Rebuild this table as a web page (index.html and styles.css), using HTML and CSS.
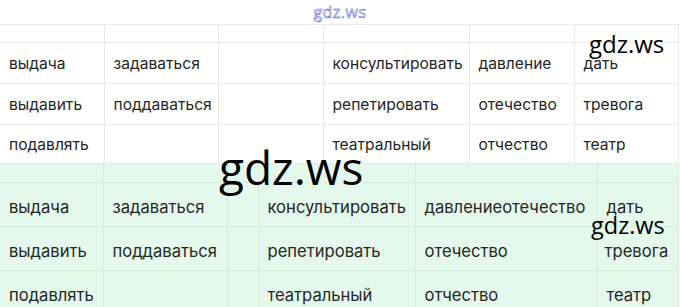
FILE: index.html
```html
<!DOCTYPE html>
<html>
<head>
<meta charset="utf-8">
<link rel="stylesheet" href="styles.css">
</head>
<body>
<div class="page">
  <div class="top"><span class="site">gdz.ws</span></div>
  <table class="grid grid-white">
    <colgroup>
      <col class="w104"><col class="w114"><col class="w105"><col class="w146"><col class="w105"><col class="w104">
    </colgroup>
    <tr class="head"><td></td><td></td><td></td><td></td><td></td><td></td></tr>
    <tr><td>выдача</td><td>задаваться</td><td></td><td>консультировать</td><td>давление</td><td>дать</td></tr>
    <tr><td>выдавить</td><td>поддаваться</td><td></td><td>репетировать</td><td>отечество</td><td>тревога</td></tr>
    <tr><td>подавлять</td><td></td><td></td><td>театральный</td><td>отчество</td><td>театр</td></tr>
  </table>
  <table class="grid grid-green">
    <colgroup>
      <col class="g1"><col class="g2"><col class="g3"><col class="g4"><col class="g5"><col class="g6">
    </colgroup>
    <tr class="head"><td></td><td></td><td></td><td></td><td></td><td></td></tr>
    <tr><td>выдача</td><td>задаваться</td><td></td><td>консультировать</td><td>давлениеотечество</td><td>дать</td></tr>
    <tr><td>выдавить</td><td>поддаваться</td><td></td><td>репетировать</td><td>отечество</td><td class="right">тревога</td></tr>
    <tr><td>подавлять</td><td></td><td></td><td>театральный</td><td>отчество</td><td>театр</td></tr>
  </table>
  <div class="wm wm-big">gdz.ws</div>
  <div class="wm wm-s1">gdz.ws</div>
  <div class="wm wm-s2">gdz.ws</div>
</div>
</body>
</html>
```
FILE: styles.css
```css
html, body {
  margin: 0;
  padding: 0;
  background: #ffffff;
}
.page {
  position: relative;
  width: 680px;
  height: 307px;
  overflow: hidden;
  font-family: Inter, "Noto Sans", sans-serif;
  color: #262626;
}
.top {
  height: 24px;
  display: flex;
  justify-content: center;
  align-items: center;
}
.site {
  font-family: "Open Sans", "DejaVu Sans", sans-serif;
  font-size: 16px;
  color: #ffffff;
  -webkit-text-stroke: 0.5px #4a4ae0;
  letter-spacing: 0.5px;
}
.grid {
  border-collapse: collapse;
  table-layout: fixed;
  width: 678px;
}
.grid td {
  padding: 0 0 0 9px;
  white-space: nowrap;
  overflow: visible;
}
.grid-white td {
  border: 1px solid #e8e8e8;
  font-size: 15.6px;
  height: 40px;
}
.grid-white tr td:first-child { border-left: none; }
.grid-white tr:first-child td { border-top: 1px solid #e8e8e8; }
.grid-white .head td { height: 17px; }
.grid-white tr:nth-child(2) td { height: 40px; }
.grid-white tr:nth-child(4) td { height: 38px; }
.w104 { width: 104px; }
.w114 { width: 114px; }
.w105 { width: 105px; }
.w146 { width: 146px; }

.grid-green {
  background: #e4f9eb;
}
.grid-green td {
  border: 1px solid #d3ecdb;
  font-size: 16.6px;
  height: 38px;
  padding-left: 9px;
  padding-top: 5px;
}
.grid-green tr td:first-child { border-left: none; }
.grid-green tr:first-child td { border-top: none; }
.grid-green .head td { height: 18px; padding-top: 0; }
.grid-green td.right { padding-left: 7px; }
.g1 { width: 103px; }
.g2 { width: 124px; }
.g3 { width: 31px; }
.g4 { width: 157px; }
.g5 { width: 182px; }
.g6 { width: 81px; }

.wm {
  position: absolute;
  font-family: "Open Sans", "Noto Sans", sans-serif;
  color: #000000;
  line-height: 1;
}
.wm-big {
  left: 219px;
  top: 144px;
  font-size: 46px;
}
.wm-s1 {
  left: 589px;
  top: 32px;
  font-size: 24px;
}
.wm-s2 {
  left: 591px;
  top: 214px;
  font-size: 23.5px;
}
```
